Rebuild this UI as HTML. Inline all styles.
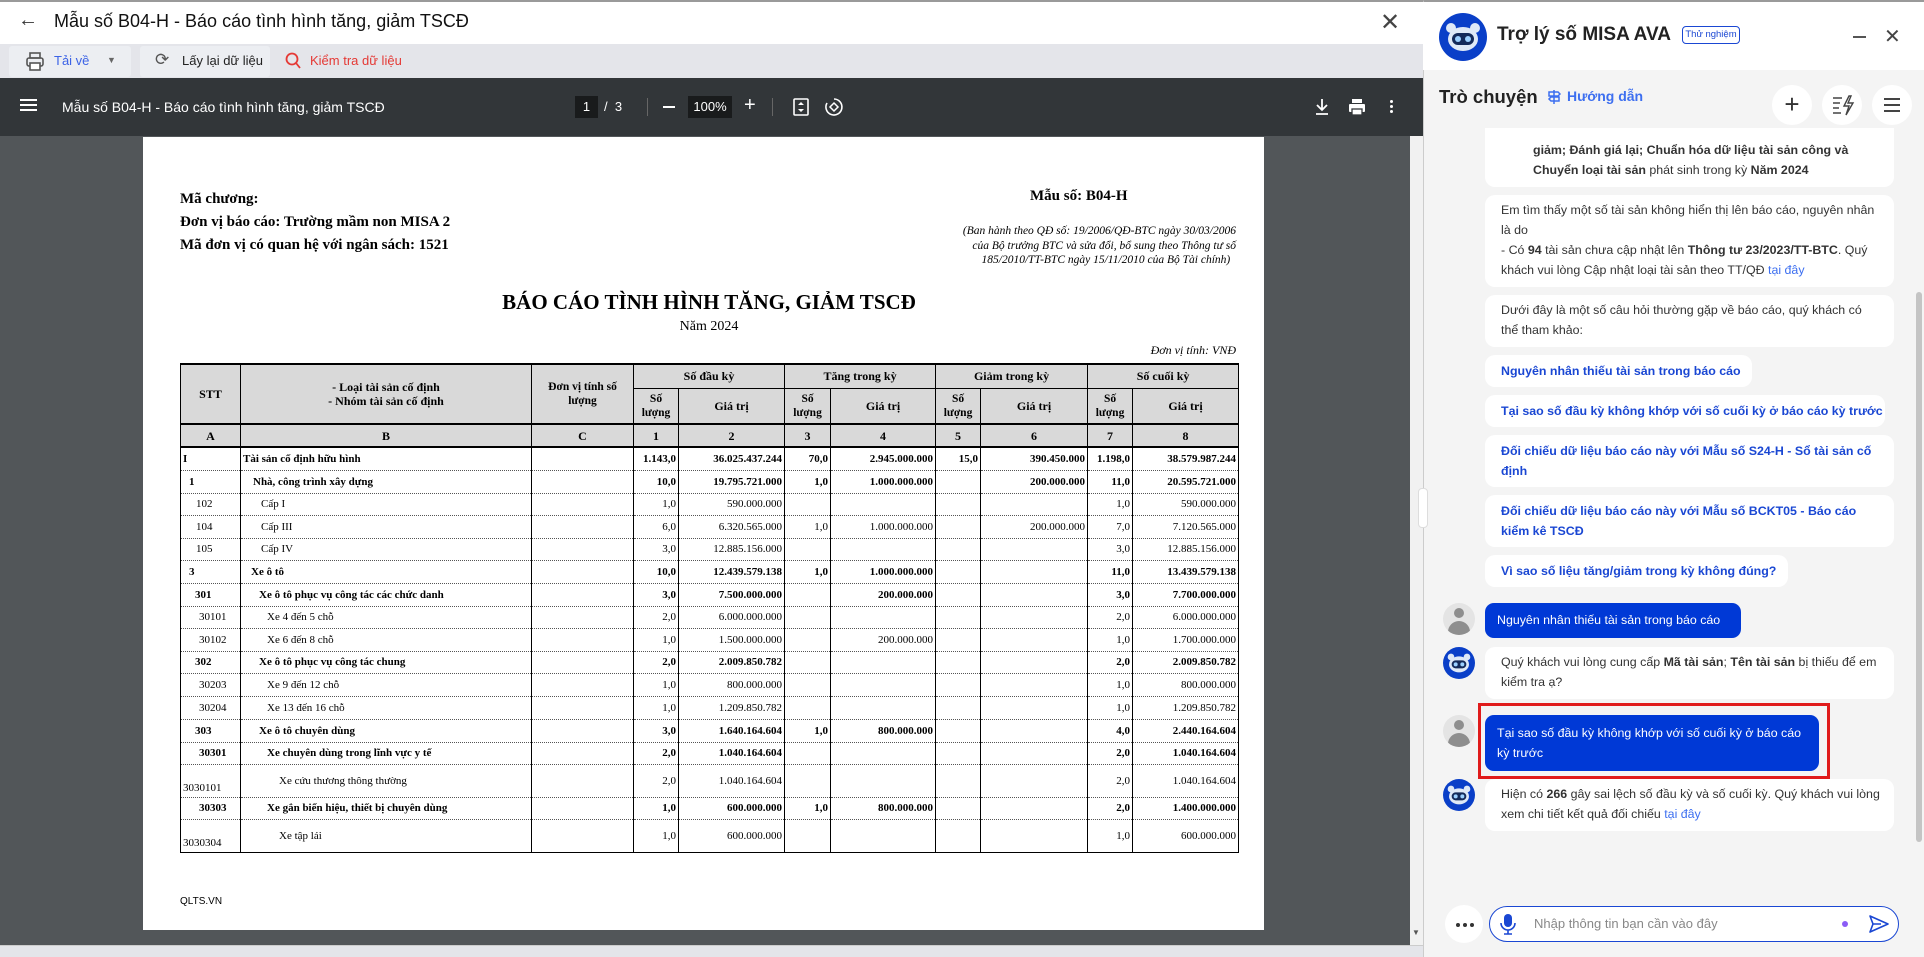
<!DOCTYPE html>
<html><head><meta charset="utf-8">
<style>
*{box-sizing:border-box;margin:0;padding:0}
body{width:1924px;height:957px;overflow:hidden;position:relative;background:#fff;font-family:"Liberation Sans",Arial,sans-serif}
.abs{position:absolute}
.ser{font-family:"Liberation Serif","Times New Roman",serif}
table{border-collapse:collapse;table-layout:fixed;font-family:"Liberation Serif",serif;font-size:11px;color:#000}
td{border-left:1px solid #000;border-right:1px solid #000;border-bottom:1px dotted #555;padding:0 2px;white-space:nowrap;overflow:hidden}
td.r{text-align:right}
tr.b td{font-weight:bold}
thead td{background:#d9d9d9;border:1px solid #000;text-align:center;font-weight:bold;font-size:12px;line-height:14px;white-space:normal}
.bub{position:absolute;left:1485px;background:#fff;border-radius:10px;font-size:12.4px;line-height:20px;color:#333;padding:5px 16px}
.chip{position:absolute;left:1485px;background:#fff;border-radius:10px;font-size:12.4px;line-height:20px;color:#1a47d3;font-weight:bold;padding:6px 16px;white-space:nowrap}
.chip.w{white-space:normal}
.ub{position:absolute;left:1485px;background:#0039d6;border-radius:9px;font-size:12.4px;line-height:20px;color:#fff;padding:7px 12px}
.ua{position:absolute;left:1443px;width:32px;height:32px;border-radius:50%;background:#e4e4e4;overflow:hidden}
.ua:before{content:"";position:absolute;left:11px;top:5px;width:10px;height:10px;border-radius:50%;background:#8e8e8e}
.ua:after{content:"";position:absolute;left:5px;top:18px;width:22px;height:14px;border-radius:11px 11px 0 0;background:#8e8e8e}
</style></head><body>

<div class="abs" style="left:0;top:0;width:1423px;height:44px;background:#fff;border-top:2px solid #9a9a9a"></div>
<div class="abs" style="left:18px;top:9px;font-size:20px;color:#333">&#8592;</div>
<div class="abs" style="left:54px;top:11px;font-size:18px;color:#111">Mẫu số B04-H - Báo cáo tình hình tăng, giảm TSCĐ</div>
<div class="abs" style="left:1380px;top:8px;font-size:24px;color:#444;font-weight:300">✕</div>

<div class="abs" style="left:0;top:44px;width:1423px;height:34px;background:#e4e5ea"></div>
<div class="abs" style="left:9px;top:46px;width:122px;height:31px;background:#eceef2;border-radius:3px"></div>
<svg class="abs" style="left:26px;top:52px" width="18" height="20" viewBox="0 0 18 20"><rect x="4" y="1" width="10" height="5" fill="none" stroke="#555" stroke-width="1.6"/><rect x="1" y="6" width="16" height="8" rx="2" fill="none" stroke="#555" stroke-width="1.6"/><rect x="4" y="11" width="10" height="7" fill="#fff" stroke="#555" stroke-width="1.6"/></svg>
<div class="abs" style="left:54px;top:53px;font-size:13px;color:#3c63e6">Tải về</div>
<div class="abs" style="left:107px;top:55px;font-size:9px;color:#666">▼</div>
<div class="abs" style="left:140px;top:46px;width:130px;height:31px;background:#eceef2;border-radius:3px"></div>
<div class="abs" style="left:155px;top:50px;font-size:17px;color:#555">⟳</div>
<div class="abs" style="left:182px;top:53px;font-size:13px;color:#222">Lấy lại dữ liệu</div>
<svg class="abs" style="left:285px;top:52px" width="16" height="18"><circle cx="7" cy="7" r="5.5" fill="none" stroke="#e53935" stroke-width="1.8"/><line x1="11" y1="11" x2="15" y2="16" stroke="#e53935" stroke-width="1.8"/></svg>
<div class="abs" style="left:310px;top:53px;font-size:13px;color:#e53935">Kiểm tra dữ liệu</div>

<div class="abs" style="left:0;top:78px;width:1423px;height:58px;background:#323639"></div>
<div class="abs" style="left:20px;top:99px;width:17px;height:2px;background:#fff;box-shadow:0 5px 0 #fff,0 10px 0 #fff"></div>
<div class="abs" style="left:62px;top:99px;font-size:14px;color:#fff">Mẫu số B04-H - Báo cáo tình hình tăng, giảm TSCĐ</div>
<div class="abs" style="left:575px;top:96px;width:23px;height:22px;background:#191b1c;color:#fff;font-size:13px;text-align:center;line-height:22px">1</div>
<div class="abs" style="left:604px;top:99px;font-size:13px;color:#fff">/ &nbsp;3</div>
<div class="abs" style="left:647px;top:98px;width:1px;height:18px;background:#666"></div>
<div class="abs" style="left:663px;top:106px;width:12px;height:2px;background:#fff"></div>
<div class="abs" style="left:688px;top:96px;width:44px;height:22px;background:#191b1c;color:#fff;font-size:13px;text-align:center;line-height:22px">100%</div>
<div class="abs" style="left:744px;top:94px;font-size:20px;color:#fff">+</div>
<div class="abs" style="left:772px;top:98px;width:1px;height:18px;background:#666"></div>
<svg class="abs" style="left:793px;top:98px" width="16" height="18"><rect x="1" y="1" width="14" height="16" rx="1" fill="none" stroke="#fff" stroke-width="1.6"/><path d="M8 4l-3 3h6zM8 14l-3-3h6z" fill="#fff"/></svg>
<svg class="abs" style="left:824px;top:96px" width="20" height="22"><path d="M10 3a8 8 0 1 1-7 4" fill="none" stroke="#fff" stroke-width="1.6"/><path d="M10 7l4 4-4 4-4-4z" fill="none" stroke="#fff" stroke-width="1.5"/></svg>
<svg class="abs" style="left:1314px;top:98px" width="16" height="18"><path d="M8 1v10M3 7l5 5 5-5M2 16h12" fill="none" stroke="#fff" stroke-width="1.8"/></svg>
<svg class="abs" style="left:1348px;top:98px" width="18" height="18"><rect x="4" y="1" width="10" height="4" fill="#fff"/><rect x="1" y="6" width="16" height="8" rx="1" fill="#fff"/><rect x="4" y="11" width="10" height="6" fill="#fff" stroke="#323639" stroke-width="1.3"/></svg>
<div class="abs" style="left:1390px;top:100px;width:3px;height:3px;background:#fff;border-radius:50%;box-shadow:0 5px 0 #fff,0 10px 0 #fff"></div>

<div class="abs" style="left:0;top:136px;width:1410px;height:809px;background:#525659"></div>
<div class="abs" style="left:1410px;top:136px;width:13px;height:809px;background:#f1f1f1"></div>
<div class="abs" style="left:1412px;top:928px;font-size:8px;color:#555">▼</div>
<div class="abs" style="left:0;top:945px;width:1423px;height:12px;background:#e4e5ea;border-top:1px solid #ccc"></div>

<div class="abs" style="left:143px;top:137px;width:1121px;height:793px;background:#fff"></div>
<div class="abs ser" style="left:180px;top:188px;font-size:15px;font-weight:bold;line-height:23px">Mã chương:<br>Đơn vị báo cáo: Trường mầm non MISA 2<br>Mã đơn vị có quan hệ với ngân sách: 1521</div>
<div class="abs ser" style="left:1030px;top:188px;font-size:15px;font-weight:bold">Mẫu số: B04-H</div>
<div class="abs ser" style="left:880px;top:224px;width:356px;font-size:11.5px;font-style:italic;line-height:14.5px;text-align:right">(Ban hành theo QĐ số: 19/2006/QĐ-BTC ngày 30/03/2006<br>của Bộ trưởng BTC và sửa đổi, bổ sung theo Thông tư số<br>185/2010/TT-BTC ngày 15/11/2010 của Bộ Tài chính)&nbsp;&nbsp;</div>
<div class="abs ser" style="left:180px;top:290px;width:1058px;text-align:center;font-size:21px;font-weight:bold">BÁO CÁO TÌNH HÌNH TĂNG, GIẢM TSCĐ</div>
<div class="abs ser" style="left:180px;top:319px;width:1058px;text-align:center;font-size:14px">Năm 2024</div>
<div class="abs ser" style="left:1000px;top:343px;width:236px;text-align:right;font-size:12px;font-style:italic">Đơn vị tính: VNĐ</div>

<table class="abs" style="left:180px;top:363px;width:1058px;border-bottom:1px solid #000">
<colgroup><col style="width:60px"><col style="width:291px"><col style="width:102px"><col style="width:45px"><col style="width:106px"><col style="width:46px"><col style="width:105px"><col style="width:45px"><col style="width:107px"><col style="width:45px"><col style="width:106px"></colgroup>
<thead>
<tr style="height:24px"><td rowspan="2" style="border-top:2px solid #000">STT</td><td rowspan="2" style="border-top:2px solid #000">- Loại tài sản cố định<br>- Nhóm tài sản cố định</td><td rowspan="2" style="border-top:2px solid #000;font-size:11.5px">Đơn vị tính số lượng</td><td colspan="2" style="border-top:2px solid #000">Số đầu kỳ</td><td colspan="2" style="border-top:2px solid #000">Tăng trong kỳ</td><td colspan="2" style="border-top:2px solid #000">Giảm trong kỳ</td><td colspan="2" style="border-top:2px solid #000">Số cuối kỳ</td></tr>
<tr style="height:36px"><td style="font-size:11.5px">Số lượng</td><td>Giá trị</td><td style="font-size:11.5px">Số lượng</td><td>Giá trị</td><td style="font-size:11.5px">Số lượng</td><td>Giá trị</td><td style="font-size:11.5px">Số lượng</td><td>Giá trị</td></tr>
<tr style="height:23px"><td style="border-top:2px solid #000;border-bottom:2px solid #000">A</td><td style="border-top:2px solid #000;border-bottom:2px solid #000">B</td><td style="border-top:2px solid #000;border-bottom:2px solid #000">C</td><td style="border-top:2px solid #000;border-bottom:2px solid #000">1</td><td style="border-top:2px solid #000;border-bottom:2px solid #000">2</td><td style="border-top:2px solid #000;border-bottom:2px solid #000">3</td><td style="border-top:2px solid #000;border-bottom:2px solid #000">4</td><td style="border-top:2px solid #000;border-bottom:2px solid #000">5</td><td style="border-top:2px solid #000;border-bottom:2px solid #000">6</td><td style="border-top:2px solid #000;border-bottom:2px solid #000">7</td><td style="border-top:2px solid #000;border-bottom:2px solid #000">8</td></tr>
</thead>
<tbody>
<tr class="b" style="height:23px"><td>I</td><td>Tài sản cố định hữu hình</td><td></td><td class="r">1.143,0</td><td class="r">36.025.437.244</td><td class="r">70,0</td><td class="r">2.945.000.000</td><td class="r">15,0</td><td class="r">390.450.000</td><td class="r">1.198,0</td><td class="r">38.579.987.244</td></tr>
<tr class="b" style="height:23px"><td style="padding-left:8px">1</td><td style="padding-left:12px">Nhà, công trình xây dựng</td><td></td><td class="r">10,0</td><td class="r">19.795.721.000</td><td class="r">1,0</td><td class="r">1.000.000.000</td><td class="r"></td><td class="r">200.000.000</td><td class="r">11,0</td><td class="r">20.595.721.000</td></tr>
<tr style="height:22px"><td style="padding-left:15px">102</td><td style="padding-left:20px">Cấp I</td><td></td><td class="r">1,0</td><td class="r">590.000.000</td><td></td><td></td><td></td><td></td><td class="r">1,0</td><td class="r">590.000.000</td></tr>
<tr style="height:23px"><td style="padding-left:15px">104</td><td style="padding-left:20px">Cấp III</td><td></td><td class="r">6,0</td><td class="r">6.320.565.000</td><td class="r">1,0</td><td class="r">1.000.000.000</td><td></td><td class="r">200.000.000</td><td class="r">7,0</td><td class="r">7.120.565.000</td></tr>
<tr style="height:22px"><td style="padding-left:15px">105</td><td style="padding-left:20px">Cấp IV</td><td></td><td class="r">3,0</td><td class="r">12.885.156.000</td><td></td><td></td><td></td><td></td><td class="r">3,0</td><td class="r">12.885.156.000</td></tr>
<tr class="b" style="height:23px"><td style="padding-left:8px">3</td><td style="padding-left:10px">Xe ô tô</td><td></td><td class="r">10,0</td><td class="r">12.439.579.138</td><td class="r">1,0</td><td class="r">1.000.000.000</td><td></td><td></td><td class="r">11,0</td><td class="r">13.439.579.138</td></tr>
<tr class="b" style="height:23px"><td style="padding-left:14px">301</td><td style="padding-left:18px">Xe ô tô phục vụ công tác các chức danh</td><td></td><td class="r">3,0</td><td class="r">7.500.000.000</td><td></td><td class="r">200.000.000</td><td></td><td></td><td class="r">3,0</td><td class="r">7.700.000.000</td></tr>
<tr style="height:22px"><td style="padding-left:18px">30101</td><td style="padding-left:26px">Xe 4 đến 5 chỗ</td><td></td><td class="r">2,0</td><td class="r">6.000.000.000</td><td></td><td></td><td></td><td></td><td class="r">2,0</td><td class="r">6.000.000.000</td></tr>
<tr style="height:23px"><td style="padding-left:18px">30102</td><td style="padding-left:26px">Xe 6 đến 8 chỗ</td><td></td><td class="r">1,0</td><td class="r">1.500.000.000</td><td></td><td class="r">200.000.000</td><td></td><td></td><td class="r">1,0</td><td class="r">1.700.000.000</td></tr>
<tr class="b" style="height:22px"><td style="padding-left:14px">302</td><td style="padding-left:18px">Xe ô tô phục vụ công tác chung</td><td></td><td class="r">2,0</td><td class="r">2.009.850.782</td><td></td><td></td><td></td><td></td><td class="r">2,0</td><td class="r">2.009.850.782</td></tr>
<tr style="height:23px"><td style="padding-left:18px">30203</td><td style="padding-left:26px">Xe 9 đến 12 chỗ</td><td></td><td class="r">1,0</td><td class="r">800.000.000</td><td></td><td></td><td></td><td></td><td class="r">1,0</td><td class="r">800.000.000</td></tr>
<tr style="height:23px"><td style="padding-left:18px">30204</td><td style="padding-left:26px">Xe 13 đến 16 chỗ</td><td></td><td class="r">1,0</td><td class="r">1.209.850.782</td><td></td><td></td><td></td><td></td><td class="r">1,0</td><td class="r">1.209.850.782</td></tr>
<tr class="b" style="height:23px"><td style="padding-left:14px">303</td><td style="padding-left:18px">Xe ô tô chuyên dùng</td><td></td><td class="r">3,0</td><td class="r">1.640.164.604</td><td class="r">1,0</td><td class="r">800.000.000</td><td></td><td></td><td class="r">4,0</td><td class="r">2.440.164.604</td></tr>
<tr class="b" style="height:22px"><td style="padding-left:18px">30301</td><td style="padding-left:26px">Xe chuyên dùng trong lĩnh vực y tế</td><td></td><td class="r">2,0</td><td class="r">1.040.164.604</td><td></td><td></td><td></td><td></td><td class="r">2,0</td><td class="r">1.040.164.604</td></tr>
<tr style="height:33px"><td style="vertical-align:bottom;padding-bottom:3px">3030101</td><td style="padding-left:38px">Xe cứu thương thông thường</td><td></td><td class="r">2,0</td><td class="r">1.040.164.604</td><td></td><td></td><td></td><td></td><td class="r">2,0</td><td class="r">1.040.164.604</td></tr>
<tr class="b" style="height:22px"><td style="padding-left:18px">30303</td><td style="padding-left:26px">Xe gắn biển hiệu, thiết bị chuyên dùng</td><td></td><td class="r">1,0</td><td class="r">600.000.000</td><td class="r">1,0</td><td class="r">800.000.000</td><td></td><td></td><td class="r">2,0</td><td class="r">1.400.000.000</td></tr>
<tr style="height:33px"><td style="vertical-align:bottom;padding-bottom:3px;border-bottom:1px solid #000">3030304</td><td style="padding-left:38px;border-bottom:1px solid #000">Xe tập lái</td><td style="border-bottom:1px solid #000"></td><td class="r" style="border-bottom:1px solid #000">1,0</td><td class="r" style="border-bottom:1px solid #000">600.000.000</td><td style="border-bottom:1px solid #000"></td><td style="border-bottom:1px solid #000"></td><td style="border-bottom:1px solid #000"></td><td style="border-bottom:1px solid #000"></td><td class="r" style="border-bottom:1px solid #000">1,0</td><td class="r" style="border-bottom:1px solid #000">600.000.000</td></tr>
</tbody></table>
<div class="abs" style="left:180px;top:896px;font-size:10px;color:#000">QLTS.VN</div>

<!-- right panel -->
<div class="abs" style="left:1423px;top:0;width:501px;height:957px;background:#f4f4f4;border-top:2px solid #9a9a9a;border-left:1px solid #ccc"></div>
<div class="abs" style="left:1423px;top:2px;width:501px;height:68px;background:#fff"></div>
<svg class="abs" style="left:1439px;top:13px" width="48" height="48" viewBox="0 0 48 48"><circle cx="24" cy="24" r="24" fill="#0a3fc8"/><circle cx="12" cy="15" r="5" fill="#dfe9f7"/><circle cx="36" cy="15" r="5" fill="#dfe9f7"/><ellipse cx="24" cy="26" rx="15" ry="12" fill="#dfe9f7"/><rect x="13" y="20" width="22" height="12" rx="6" fill="#142a5a"/><circle cx="19" cy="26" r="3" fill="#9cd0ff"/><circle cx="29" cy="26" r="3" fill="#9cd0ff"/></svg>
<div class="abs" style="left:1497px;top:24px;font-size:19px;color:#222;font-weight:bold;white-space:nowrap">Trợ lý số MISA AVA</div>
<div class="abs" style="left:1682px;top:26px;width:58px;height:18px;border:1.5px solid #1a47d3;border-radius:4px;font-size:9.5px;color:#1a47d3;text-align:center;line-height:15px;white-space:nowrap">Thử nghiệm</div>
<div class="abs" style="left:1853px;top:36px;width:13px;height:2px;background:#555"></div>
<div class="abs" style="left:1884px;top:24px;font-size:20px;color:#444">✕</div>

<div class="abs" style="left:1439px;top:86px;font-size:18.5px;color:#222;font-weight:bold;white-space:nowrap">Trò chuyện</div>
<svg class="abs" style="left:1547px;top:89px" width="14" height="16"><path d="M7 1v14M2 3h9l2 2-2 2H2zM12 8H4L2 10l2 2h8z" fill="none" stroke="#3d6ff0" stroke-width="1.5"/></svg>
<div class="abs" style="left:1567px;top:88px;font-size:14px;color:#3d6ff0;font-weight:bold">Hướng dẫn</div>
<div class="abs" style="left:1772px;top:85px;width:40px;height:40px;border-radius:50%;background:#fff;text-align:center;font-size:26px;line-height:38px;color:#333">+</div>
<svg class="abs" style="left:1822px;top:85px" width="40" height="40"><circle cx="20" cy="20" r="20" fill="#fff"/><path d="M11 13h9M11 18h7M11 23h6M11 28h8" stroke="#444" stroke-width="1.5"/><path d="M27 11l-5 10h5l-3 9 7-12h-5l3-7z" fill="none" stroke="#444" stroke-width="1.4"/></svg>
<div class="abs" style="left:1872px;top:85px;width:40px;height:40px;border-radius:50%;background:#fff"></div>
<div class="abs" style="left:1884px;top:98px;width:16px;height:2px;background:#444;box-shadow:0 6px 0 #444,0 12px 0 #444"></div>

<div class="abs" style="left:1916px;top:292px;width:6px;height:550px;background:#c4c4c4;border-radius:3px"></div>
<div class="abs" style="left:1418px;top:488px;width:10px;height:40px;background:#fff;border-radius:4px;border:1px solid #ddd"></div>

<div class="bub" style="top:128px;height:59px;width:409px;border-radius:0 0 10px 10px;padding:12px 10px 0 48px;white-space:nowrap"><b>giảm; Đánh giá lại; Chuẩn hóa dữ liệu tài sản công và</b><br><b>Chuyển loại tài sản</b> phát sinh trong kỳ <b>Năm 2024</b></div>
<div class="bub" style="top:195px;width:409px;height:92px;padding-right:12px">Em tìm thấy một số tài sản không hiển thị lên báo cáo, nguyên nhân là do<br>- Có <b>94</b> tài sản chưa cập nhật lên <b>Thông tư 23/2023/TT-BTC</b>. Quý khách vui lòng Cập nhật loại tài sản theo TT/QĐ <span style="color:#3d6ff0">tại đây</span></div>
<div class="bub" style="top:295px;width:409px;height:52px;padding-right:12px">Dưới đây là một số câu hỏi thường gặp về báo cáo, quý khách có thể tham khảo:</div>
<div class="chip" style="top:355px;width:267px;height:32px">Nguyên nhân thiếu tài sản trong báo cáo</div>
<div class="chip" style="top:395px;width:400px;height:32px">Tại sao số đầu kỳ không khớp với số cuối kỳ ở báo cáo kỳ trước</div>
<div class="chip w" style="top:435px;width:409px;height:52px">Đối chiếu dữ liệu báo cáo này với Mẫu số S24-H - Sổ tài sản cố định</div>
<div class="chip w" style="top:495px;width:409px;height:52px">Đối chiếu dữ liệu báo cáo này với Mẫu số BCKT05 - Báo cáo kiểm kê TSCĐ</div>
<div class="chip" style="top:555px;width:303px;height:32px">Vì sao số liệu tăng/giảm trong kỳ không đúng?</div>

<div class="ua" style="top:603px"></div>
<div class="ub" style="top:603px;width:256px;height:35px;white-space:nowrap">Nguyên nhân thiếu tài sản trong báo cáo</div>

<svg class="abs" style="left:1443px;top:647px" width="32" height="32" viewBox="0 0 48 48"><circle cx="24" cy="24" r="24" fill="#0a3fc8"/><circle cx="12" cy="15" r="5" fill="#dfe9f7"/><circle cx="36" cy="15" r="5" fill="#dfe9f7"/><ellipse cx="24" cy="26" rx="15" ry="12" fill="#dfe9f7"/><rect x="13" y="20" width="22" height="12" rx="6" fill="#142a5a"/><circle cx="19" cy="26" r="3" fill="#9cd0ff"/><circle cx="29" cy="26" r="3" fill="#9cd0ff"/></svg>
<div class="bub" style="top:647px;width:409px;height:52px;padding-right:12px">Quý khách vui lòng cung cấp <b>Mã tài sản</b>; <b>Tên tài sản</b> bị thiếu để em kiểm tra ạ?</div>

<div class="ua" style="top:715px"></div>
<div class="abs" style="left:1478px;top:703px;width:352px;height:76px;border:3px solid #e01b1b"></div>
<div class="ub" style="top:715px;width:334px;height:56px;padding:8px 12px">Tại sao số đầu kỳ không khớp với số cuối kỳ ở báo cáo kỳ trước</div>

<svg class="abs" style="left:1443px;top:779px" width="32" height="32" viewBox="0 0 48 48"><circle cx="24" cy="24" r="24" fill="#0a3fc8"/><circle cx="12" cy="15" r="5" fill="#dfe9f7"/><circle cx="36" cy="15" r="5" fill="#dfe9f7"/><ellipse cx="24" cy="26" rx="15" ry="12" fill="#dfe9f7"/><rect x="13" y="20" width="22" height="12" rx="6" fill="#142a5a"/><circle cx="19" cy="26" r="3" fill="#9cd0ff"/><circle cx="29" cy="26" r="3" fill="#9cd0ff"/></svg>
<div class="bub" style="top:779px;width:409px;height:52px;padding-right:12px">Hiện có <b>266</b> gây sai lệch số đầu kỳ và số cuối kỳ. Quý khách vui lòng xem chi tiết kết quả đối chiếu <span style="color:#3d6ff0">tại đây</span></div>

<div class="abs" style="left:1445px;top:905px;width:38px;height:38px;border-radius:50%;background:#fff"></div>
<div class="abs" style="left:1456px;top:923px;width:4px;height:4px;border-radius:50%;background:#333;box-shadow:7px 0 0 #333,14px 0 0 #333"></div>
<div class="abs" style="left:1489px;top:906px;width:410px;height:36px;border:1.5px solid #1a47d3;border-radius:18px;background:#fff"></div>
<svg class="abs" style="left:1500px;top:913px" width="16" height="22"><rect x="4" y="1" width="8" height="13" rx="4" fill="#1a47d3"/><path d="M1 10a7 7 0 0 0 14 0M8 17v4M4 21h8" fill="none" stroke="#1a47d3" stroke-width="1.6"/></svg>
<div class="abs" style="left:1534px;top:916px;font-size:13px;color:#888">Nhập thông tin bạn cần vào đây</div>
<div class="abs" style="left:1842px;top:921px;width:6px;height:6px;border-radius:50%;background:#8b5cf6"></div>
<svg class="abs" style="left:1868px;top:913px" width="22" height="22"><path d="M2 3l18 8-18 8 3-8z M5 11h8" fill="none" stroke="#1a47d3" stroke-width="1.6" stroke-linejoin="round"/></svg>
</body></html>
